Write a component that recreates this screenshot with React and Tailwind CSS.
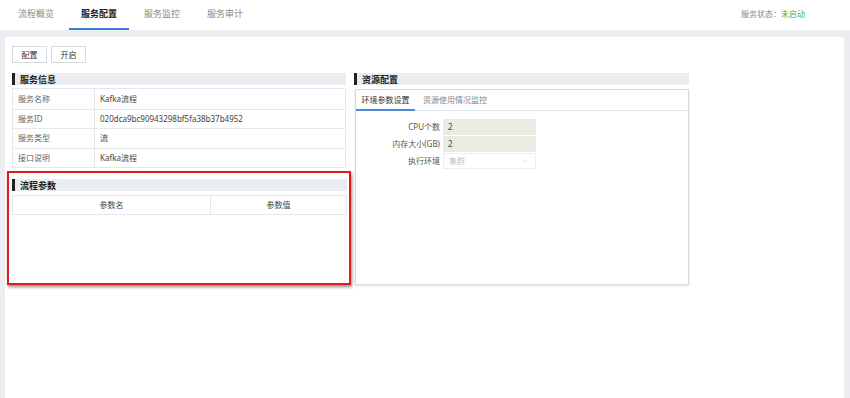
import { ChevronDown } from 'lucide-react';

const TABS = ['流程概览', '服务配置', '服务监控', '服务审计'];

const SERVICE_INFO = [
  { label: '服务名称', value: 'Kafka流程' },
  { label: '服务ID', value: '020dca9bc90943298bf5fa38b37b4952' },
  { label: '服务类型', value: '流' },
  { label: '接口说明', value: 'Kafka流程' },
];

function SectionTitle({ children }) {
  return (
    <div className="h-[12px] bg-[#e9ecf1] flex items-center">
      <span className="w-[3px] h-full bg-[#222]" />
      <span className="ml-[5px] text-[9px] font-bold text-[#222] leading-none">{children}</span>
    </div>
  );
}

function FormRow({ label, children }) {
  return (
    <div className="flex items-center h-[16px]">
      <div className="w-[87px] pr-[3px] text-right text-[8px] text-[#555]">{label}</div>
      {children}
    </div>
  );
}

export default function App() {
  return (
    <div
      className="h-[398px] bg-[#ebedf0] flex flex-col overflow-hidden"
      style={{ fontFamily: '"Noto Sans", "Noto Sans CJK SC", sans-serif' }}
    >
      {/* Top tabs */}
      <div className="h-[30px] bg-white flex items-stretch justify-between">
        <div className="flex pl-[6px] gap-[3px]">
          {TABS.map((t, i) => (
            <div
              key={t}
              className={
                'px-[12px] flex items-center text-[9px] border-b-2 ' +
                (i === 1 ? 'border-[#3b7ddd] text-[#222] font-bold' : 'border-transparent text-[#888]')
              }
            >
              {t}
            </div>
          ))}
        </div>
        <div className="pr-[45px] pb-[2px] flex items-center text-[8px] text-[#888]">
          服务状态：<span className="text-[#3bb54a]">未启动</span>
        </div>
      </div>

      {/* Content */}
      <div className="flex-1 pt-[7px] pl-[5px] pr-[6px]">
        <div className="bg-white h-full pl-[7px] pt-[9px]">
          <div className="flex gap-[4px]">
            {['配置', '开启'].map((b) => (
              <button
                key={b}
                className="w-[35px] h-[17px] border border-[#d6d9de] bg-white text-[8px] text-[#333] flex items-center justify-center"
              >
                {b}
              </button>
            ))}
          </div>

          <div className="flex gap-[8px] mt-[10px]">
            {/* Left column */}
            <div className="w-[334px]">
              <SectionTitle>服务信息</SectionTitle>
              <div className="mt-[3px] border border-[#e4e7ec]">
                {SERVICE_INFO.map((r, i) => (
                  <div
                    key={r.label}
                    className={'flex h-[19.5px] text-[8px] ' + (i > 0 ? 'border-t border-[#e4e7ec]' : '')}
                  >
                    <div className="w-[82px] border-r border-[#e4e7ec] pl-[5px] flex items-center text-[#666]">
                      {r.label}
                    </div>
                    <div className="flex-1 pl-[5px] flex items-center text-[#444]">{r.value}</div>
                  </div>
                ))}
              </div>

              <div className="mt-[3px] -mx-[5px] h-[114px] border-2 border-[#e11a1a] shadow-[1px_2px_3px_rgba(0,0,0,0.45)] pl-[3px] pr-[2px] pt-[6px]">
                <SectionTitle>流程参数</SectionTitle>
                <div className="mt-[4px] border border-[#e4e7ec] flex h-[20px] text-[8px] text-[#444]">
                  <div className="w-[198px] border-r border-[#e4e7ec] flex items-center justify-center">参数名</div>
                  <div className="flex-1 flex items-center justify-center">参数值</div>
                </div>
              </div>
            </div>

            {/* Right column */}
            <div className="w-[335px]">
              <SectionTitle>资源配置</SectionTitle>
              <div className="mt-[4px] ml-[1px] h-[196px] border border-[#d9d9d9] shadow-[0_1px_2px_rgba(0,0,0,0.12)]">
                <div className="flex h-[21px] border-b border-[#dfe6ee]">
                  <div className="w-[59px] flex items-center justify-center text-[8px] text-[#333] border-b-2 border-[#4a8bd6] -mb-px">
                    环境参数设置
                  </div>
                  <div className="ml-[8px] flex items-center text-[8px] text-[#888]">资源使用情况监控</div>
                </div>
                <div className="pt-[8px] flex flex-col gap-[1px]">
                  <FormRow label="CPU个数">
                    <div className="w-[93px] h-full bg-[#ebebe4] pl-[5px] flex items-center text-[8px] text-[#444]">2</div>
                  </FormRow>
                  <FormRow label="内存大小(GB)">
                    <div className="w-[93px] h-full bg-[#ebebe4] pl-[5px] flex items-center text-[8px] text-[#444]">2</div>
                  </FormRow>
                  <FormRow label="执行环境">
                    <div className="w-[93px] h-full border border-[#eceef0] pl-[5px] pr-[6px] flex items-center justify-between text-[8px] text-[#c4c4c4]">
                      集群
                      <ChevronDown size={8} strokeWidth={1.5} className="text-[#c8c8c8]" />
                    </div>
                  </FormRow>
                </div>
              </div>
            </div>
          </div>
        </div>
      </div>
    </div>
  );
}
